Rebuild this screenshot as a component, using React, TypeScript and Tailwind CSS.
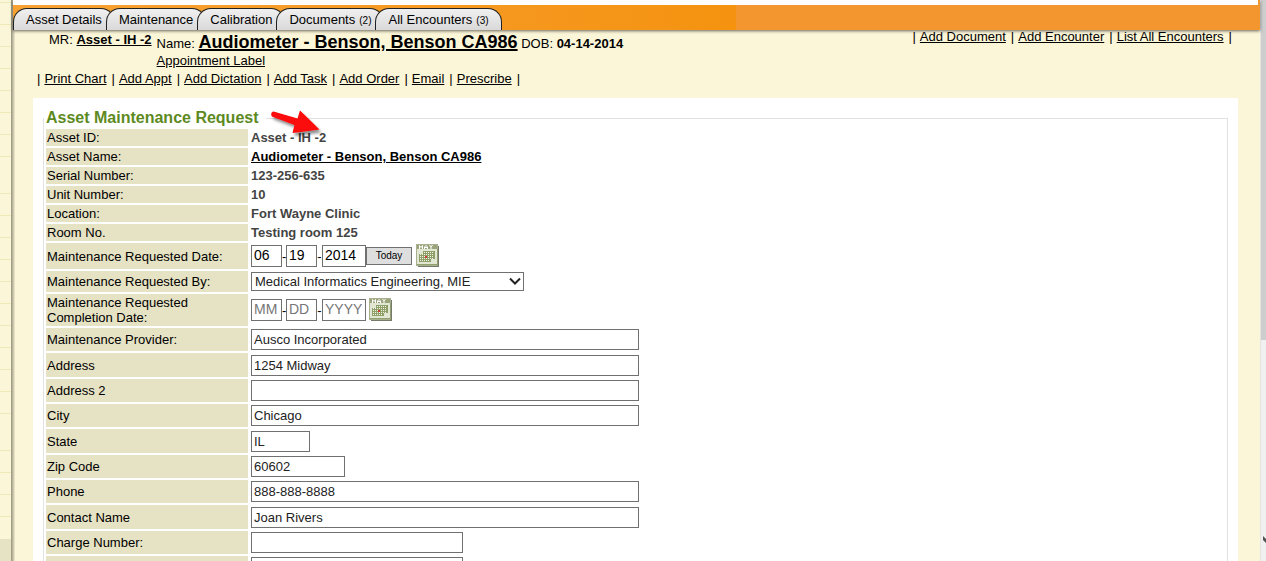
import React from "react";

const field =
  "block h-[21px] rounded-none border border-[#707070] bg-white px-[2px] text-[13px] leading-[19px] text-[#222] outline-none";
const dateField =
  "block h-[22px] rounded-none border border-[#707070] bg-white px-[2px] pb-[2px] text-[14px] leading-[18px] text-black outline-none placeholder:text-[#767676]";

const tabs = [
  { label: "Asset Details" },
  { label: "Maintenance" },
  { label: "Calibration" },
  { label: "Documents", count: 2 },
  { label: "All Encounters", count: 3 },
];

const chartLinks = [
  "Print Chart",
  "Add Appt",
  "Add Dictation",
  "Add Task",
  "Add Order",
  "Email",
  "Prescribe",
];

const encounterLinks = ["Add Document", "Add Encounter", "List All Encounters"];

const details = [
  { label: "Asset ID:", value: "Asset - IH -2" },
  { label: "Asset Name:", value: "Audiometer - Benson, Benson CA986", link: true },
  { label: "Serial Number:", value: "123-256-635" },
  { label: "Unit Number:", value: "10" },
  { label: "Location:", value: "Fort Wayne Clinic" },
  { label: "Room No.", value: "Testing room 125" },
];

const inputs = [
  { id: "provider", label: "Maintenance Provider:", value: "Ausco Incorporated", width: "w-[388px]" },
  { id: "address", label: "Address", value: "1254 Midway", width: "w-[388px]" },
  { id: "address2", label: "Address 2", value: "", width: "w-[388px]" },
  { id: "city", label: "City", value: "Chicago", width: "w-[388px]" },
  { id: "state", label: "State", value: "IL", width: "w-[59px]" },
  { id: "zip", label: "Zip Code", value: "60602", width: "w-[94px]" },
  { id: "phone", label: "Phone", value: "888-888-8888", width: "w-[388px]" },
  { id: "contact", label: "Contact Name", value: "Joan Rivers", width: "w-[388px]" },
  { id: "charge", label: "Charge Number:", value: "", width: "w-[212px]" },
  { id: "extra", label: "", value: "", width: "w-[212px]" },
];

const sidebarGroups = [8, 11, 4];

function Sidebar() {
  return (
    <aside className="w-[11px] shrink-0 overflow-hidden bg-[#fcf6d8]">
      {sidebarGroups.map((count, group) => (
        <div key={group} className={group === 0 ? "-mt-[20px]" : "pt-[15px]"}>
          {Array.from({ length: count }, (_, i) => (
            <div key={i} className="h-[22px] pt-[22px]">
              <div className="h-px bg-[#efe9b9]" />
            </div>
          ))}
        </div>
      ))}
      <div className="mt-[23px] h-[40px] bg-[#e6e2c4]" />
    </aside>
  );
}

function ScrollTrack() {
  return (
    <div className="flex w-[6px] shrink-0 flex-col justify-between border-l border-[#e4e4e4] bg-[#f0f0f0]">
      <div className="h-[340px] bg-[#cdcdcd]" />
      <svg className="mb-[17px] block" width="5" height="8" viewBox="0 0 5 8">
        <path d="M2 0 5 3V7L2 4Z" fill="#505050" />
      </svg>
    </div>
  );
}

function LinkBar({ links }: { links: string[] }) {
  return (
    <nav className="flex gap-[4px] whitespace-nowrap">
      <span>|</span>
      {links.map((text) => (
        <React.Fragment key={text}>
          <a href="#" className="mr-px underline">
            {text}
          </a>
          <span>|</span>
        </React.Fragment>
      ))}
    </nav>
  );
}

function CalendarIcon() {
  return (
    <svg width="24" height="24" viewBox="0 0 24 24" className="block">
      <rect x="2" y="2" width="21" height="21" fill="#77796d" />
      <rect x="0.5" y="0.5" width="21" height="21" fill="#e2e7d3" stroke="#a7af8e" />
      <rect x="1" y="1" width="20" height="4" fill="#9aa57c" />
      <path
        d="M3.500 5V1.500L5 3.500 6.500 1.500V5M8.500 5V3L10 1.500 11.500 3V5M8.500 3.500H11.500M13.500 1 15 3 16.500 1M15 3V5"
        fill="none"
        stroke="#fff"
      />
      <path d="M7 7H19V15H15V18H3V10H7Z" fill="#8f9f68" />
      <path
        d="M8 8.500H18M4 10.500H18M4 12.500H18M4 14.500H18M4 16.500H14"
        fill="none"
        stroke="#f1f4e6"
        strokeDasharray="1 1"
      />
      <rect x="9" y="12" width="2" height="2" fill="#cf3a2c" />
      <path d="M1 20.500H21M21.500 5V22" stroke="#93a06f" fill="none" />
    </svg>
  );
}

function CalendarButton({ label }: { label: string }) {
  return (
    <button type="button" aria-label={label} className="block">
      <CalendarIcon />
    </button>
  );
}

function DateInputs({ id, label, values }: { id: string; label: string; values: string[] }) {
  return (
    <>
      <input id={id} aria-label={label + " month"} placeholder="MM" defaultValue={values[0]} className={dateField + " w-[31px]"} />
      <span className="w-[4px] text-center">-</span>
      <input aria-label={label + " day"} placeholder="DD" defaultValue={values[1]} className={dateField + " w-[31px]"} />
      <span className="w-[5px] text-center">-</span>
      <input aria-label={label + " year"} placeholder="YYYY" defaultValue={values[2]} className={dateField + " w-[44px]"} />
    </>
  );
}

function Row({ height, label, htmlFor, children }: { height: string; label: string; htmlFor?: string; children: React.ReactNode }) {
  return (
    <tr className={height}>
      <th scope="row" className="w-[202px] bg-[#e6e2c4] px-px py-0 text-left align-middle font-normal">
        {htmlFor ? (
          <label htmlFor={htmlFor} className="block max-w-[180px]">
            {label}
          </label>
        ) : (
          label
        )}
      </th>
      <td className="px-px py-0 align-middle">{children}</td>
    </tr>
  );
}

function Arrow() {
  return (
    <svg
      className="pointer-events-none absolute -top-[20px] left-[226px]"
      width="56"
      height="34"
      viewBox="0 0 56 34"
      aria-hidden="true"
    >
      <defs>
        <filter id="arrowShadow" x="-20%" y="-20%" width="150%" height="160%">
          <feDropShadow dx="2" dy="3" stdDeviation="1.500" floodColor="#000" floodOpacity="0.45" />
        </filter>
      </defs>
      <path
        d="M3.500 3.500C1.500 3.500.5 6.500 2 8.500L24.500 17 22.500 25 49.500 21.500 30 2.500 27.500 10.500Z"
        fill="#fb0707"
        filter="url(#arrowShadow)"
      />
    </svg>
  );
}

export default function App() {
  return (
    <div
      className="flex h-screen overflow-hidden bg-[#fcf6d8] text-[13px] leading-[15px] text-black"
      style={{ fontFamily: '"Liberation Sans", Arial, sans-serif' }}
    >
      <Sidebar />
      <div className="w-[4px] shrink-0 bg-linear-to-r from-[#96937d] to-[#f2ecd0]" />
      <div className="-ml-[2px] flex min-w-0 flex-1 flex-col">
        <header className="relative shrink-0 bg-[#f49630] shadow-[0_1px_3px_rgba(0,0,0,0.6)]">
          <div className="mr-[2px] h-[5px] bg-[#fdfdfd]" />
          <div className="flex h-[25px] items-end bg-linear-to-r from-[#f7a233] from-0% via-[#f5930f] via-[58%] to-[#f49630] to-[58%]">
            {tabs.map((tab) => (
              <a
                key={tab.label}
                href="#"
                className="-ml-[9px] block h-[22px] rounded-t-[14px] border border-b-0 border-[#222] bg-linear-to-b from-[#f0f0f0] to-[#d9d9d9] px-[12px] text-[13px] leading-[21px] whitespace-nowrap first:ml-0"
              >
                {tab.label}
                {tab.count && <span className="ml-[4px] text-[10px]">({tab.count})</span>}
              </a>
            ))}
          </div>
        </header>

        <section className="-mt-px flex shrink-0 items-start justify-between pr-[28px] pl-[24px]">
          <div>
            <div className="flex gap-[5px] pl-[12px] whitespace-nowrap">
              <div className="pt-[3px]">
                MR:{" "}
                <a href="#" className="font-bold underline">
                  Asset - IH -2
                </a>
              </div>
              <div className="pt-[3px]">
                <div className="h-[21px] leading-[20px]">
                  Name:{" "}
                  <a href="#" className="text-[18px] font-bold underline decoration-2">
                    Audiometer - Benson, Benson CA986
                  </a>{" "}
                  DOB: <b>04-14-2014</b>
                </div>
                <a href="#" className="underline">
                  Appointment Label
                </a>
              </div>
            </div>
            <div className="pt-[3px]">
              <LinkBar links={chartLinks} />
            </div>
          </div>
          <LinkBar links={encounterLinks} />
        </section>

        <main className="mt-[12px] mr-[22px] ml-[20px] flex-1 bg-white px-[10px] pt-[10px]">
          <fieldset className="relative min-w-0 border border-[#e2e2e2]">
            <legend className="px-[2px] pr-[7px] text-[16px] leading-[20px] font-bold text-[#5d8a1f]">
              Asset Maintenance Request
            </legend>
            <Arrow />
            <table className="-mt-px border-separate border-spacing-[2px]">
              <tbody>
                {details.map((d) => (
                  <Row key={d.label} height="h-[17px]" label={d.label}>
                    {d.link ? (
                      <a href="#" className="font-bold underline">
                        {d.value}
                      </a>
                    ) : (
                      <b className="text-[#444]">{d.value}</b>
                    )}
                  </Row>
                ))}
                <Row height="h-[26px]" label="Maintenance Requested Date:" htmlFor="requested">
                  <div className="flex items-center">
                    <DateInputs id="requested" label="Requested" values={["06", "19", "2014"]} />
                    <button
                      type="button"
                      className="mr-[4px] h-[18px] w-[46px] border border-[#707070] bg-[#dedede] text-[10px] leading-[14px]"
                    >
                      Today
                    </button>
                    <CalendarButton label="Choose requested date" />
                  </div>
                </Row>
                <Row height="h-[21px]" label="Maintenance Requested By:" htmlFor="requestedBy">
                  <div className="relative w-[273px]">
                    <select
                      id="requestedBy"
                      className="block h-[19px] w-full appearance-none rounded-none border border-[#707070] bg-white px-[3px] text-[13px] leading-[17px] text-[#222]"
                    >
                      <option>Medical Informatics Engineering, MIE</option>
                    </select>
                    <svg
                      className="pointer-events-none absolute top-[5px] right-[3px]"
                      width="12"
                      height="9"
                      viewBox="0 0 12 9"
                    >
                      <path d="M1 1.500 6 6.500 11 1.500" fill="none" stroke="#222" strokeWidth="2" />
                    </svg>
                  </div>
                </Row>
                <Row height="h-[32px]" label="Maintenance Requested Completion Date:" htmlFor="completion">
                  <div className="flex items-center">
                    <DateInputs id="completion" label="Completion" values={["", "", ""]} />
                    <span className="w-[3px]" />
                    <CalendarButton label="Choose completion date" />
                  </div>
                </Row>
                {inputs.map((f, i) => (
                  <Row key={f.id} height={i % 3 === 1 ? "h-[24px]" : "h-[23px]"} label={f.label} htmlFor={f.id}>
                    <input id={f.id} type="text" defaultValue={f.value} className={field + " " + f.width} />
                  </Row>
                ))}
              </tbody>
            </table>
          </fieldset>
        </main>
      </div>
      <ScrollTrack />
    </div>
  );
}
